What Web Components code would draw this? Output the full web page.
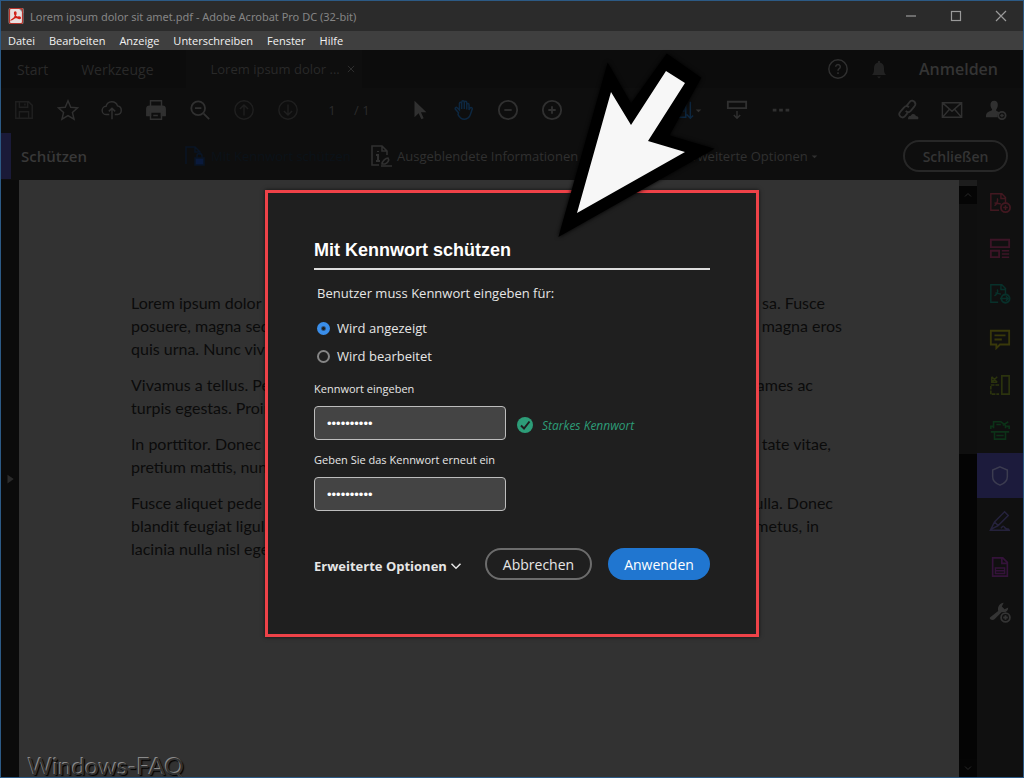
<!DOCTYPE html>
<html lang="de">
<head>
<meta charset="utf-8">
<title>Lorem ipsum dolor sit amet.pdf - Adobe Acrobat Pro DC (32-bit)</title>
<style>
html,body{margin:0;height:100%;background:#0e0e0e}
body{font-family:"Open Sans","Noto Sans",sans-serif}
</style>
</head>
<body>
<acrobat-window></acrobat-window>
<script>
const ICONS = {
  pdf: '<rect x="1" y="0" width="14" height="16" rx="2" fill="#e8e0e0"/><path d="M11 0h2a2 2 0 0 1 2 2v2z" fill="#b03028"/><rect x="1.5" y=".5" width="13" height="15" rx="1.5" fill="none" stroke="#b8352c"/><path d="M4 11.500c2-.5 4-4 4-6.500 0-1.500-1.500-1.500-1.500 0 0 2.500 3 5.500 5 5.500 1.500 0 1-1.500-.5-1.500-2.500 0-5.500 1-7 2.500z" fill="none" stroke="#d02018" stroke-width="1.3"/>',
  min: '<path d="M3 8h10"/>', max: '<rect x="3.5" y="3.5" width="9" height="9"/>', close: '<path d="M3 3l10 10M13 3L3 13"/>',
  help: '<circle cx="12" cy="12" r="10"/><path d="M9.500 9.500a2.500 2.500 0 1 1 3.800 2.200c-.9.6-1.300 1-1.300 2.100M12 15.500v2"/>',
  bell: '<path d="M5 18c2-2 2-4 2-7 0-3 1.500-5 4-5.500V4h2v1.500c2.500.5 4 2.500 4 5.500 0 3 0 5 2 7zM10 19.500h4l-2 2z" fill="currentColor" stroke="none"/>',
  save: '<path d="M3 3h14l4 4v14H3zM7 3v6h9V3M7 21v-7h10v7M13 5v2"/>',
  star: '<path d="M12 2l3 7 7.500.6-5.700 5 1.800 7.400L12 18l-6.600 4 1.800-7.400-5.700-5L9 9z"/>',
  cloud: '<path d="M9 17H6a4.500 4.500 0 0 1-.5-9A6.500 6.500 0 0 1 18 7.500 4.800 4.800 0 0 1 18 17h-3M12 22V10M8.500 13.500L12 10l3.500 3.500"/>',
  print: '<path d="M6 8V2h12v6" /><path d="M5 8h14a3 3 0 0 1 3 3v7h-4v-4H6v4H2v-7a3 3 0 0 1 3-3z" fill="currentColor"/><path d="M6 14h12v8H6zM9 18h5"/>',
  zoomout: '<circle cx="10" cy="10" r="7.500" stroke-width="2"/><path d="M16 16l6 6M6.500 10h7" stroke-width="2"/>',
  up: '<circle cx="12" cy="12" r="10"/><path d="M12 18V7M7.500 11L12 6.500l4.500 4.500"/>',
  down: '<circle cx="12" cy="12" r="10"/><path d="M12 6v11M7.500 13l4.500 4.500 4.500-4.500"/>',
  pointer: '<path d="M6 2v18l4.500-4.500L13.500 22l2.500-1-3-6.500h6z" fill="currentColor" stroke="none"/>',
  hand: '<path d="M6 15l-3.500-4c-.7-1.500 1-2.500 2-1.500L7 12V5c0-2 2.500-2 2.500 0v6V3.500c0-2 2.800-2 2.800 0V11 4c0-2 2.700-2 2.700 0v7.500V6.500c0-2 2.500-2 2.500 0V12l1-2c1-1.500 3-.5 2.500 1l-2 6c-1 3-3 5-6.500 5-4 0-5.500-2-7-5z"/>',
  minus: '<circle cx="12" cy="12" r="10" stroke-width="2"/><path d="M8 12h8" stroke-width="2"/>',
  plus: '<circle cx="12" cy="12" r="10" stroke-width="2"/><path d="M8 12h8M12 8v8" stroke-width="2"/>',
  fit: '<path d="M3 4h12v16H3zM8 8l5 5M13 9v4H9M20 3v18M16 17l4 4 3-3"/>',
  read: '<path d="M2 3h20v7H2z" stroke-width="2"/><path d="M12 13v8M8.500 17.500L12 21l3.500-3.500"/>',
  dots: '<path d="M3 10.500h4v3H3zM10 10.500h4v3h-4zM17 10.500h4v3h-4z" fill="currentColor" stroke="none"/>',
  caret: '<path d="M3 6h10l-5 5z" fill="currentColor" stroke="none"/>',
  link: '<path d="M10 8l4-5c2-2 4-1 5 0s2 3 0 5l-4 5c-2 2-4 1.500-5.500 0M13 9c-2-2-4-1.500-5.500.500l-4 4.500c-2 2-1 4 0 5s3 2 5 0l3-3.500" stroke-width="2"/><path d="M12 22c0-3 2-4 3-3.500 1-3 5-2.500 5.500 0C23 18.500 24 20 23 22z" fill="currentColor" stroke="none"/>',
  mail: '<path d="M1.500 4h21v16h-21zM2 4.500l10 9 10-9M2 19.500l7-8M22 19.500l-7-8"/>',
  person: '<path d="M10 2c3 0 4 2 4 4.500S12.500 11 12 12c0 1.500 2 1.500 4 2.500-2 1.500-2.500 3.500-2 5.500H1c0-5 2-6 5-7 2-.5 2-1 1.500-2C6.500 9 6 8 6 6.500 6 4 7 2 10 2z" fill="currentColor" stroke="none"/><circle cx="18.500" cy="18" r="4" stroke-width="2"/><path d="M18.500 16v4M16.500 18h4"/>',
  info: '<path d="M10 21H3V2h10l5 5v4M13 2v5h5"/><path d="M9 10v7M7 11h2M7 17h4M9 7v1" stroke-width="2"/><path d="M13 20c0-3 4-6 6-6 1.500 2 0 5-3 6zM12 22h11"/>',
  lock: '<path d="M3 20V3h9l5 5v3M12 3v5h5"/><path d="M12 14h9v7h-9z" fill="#0a1a3c"/><path d="M14 14v-2a2.500 2.500 0 0 1 5 0v2"/>',
  chevron: '<path d="M2 5l6 6 6-6" stroke-width="2"/>',
  check: '<circle cx="8" cy="8" r="8" fill="#2d9d78" stroke="none"/><path d="M4 8.500l3 3 5.500-7" stroke="#1f1f1f" stroke-width="2"/>',
  play: '<path d="M4 1l10 7-10 7z" fill="currentColor" stroke="none"/>',
  chevup: '<path d="M4 10l4-4 4 4"/>', chevdown: '<path d="M4 6l4 4 4-4"/>',
  create: '<path d="M11 20H2V2h12l4 4v6M13 2v5h5M6 15c3-2 4-6 3-8M6 12c3 0 5 1 7 1"/><circle cx="18" cy="17" r="5" stroke-width="2"/><path d="M18 14.500v5M15.500 17h5"/>',
  organize: '<path d="M2 3h20v8H2zM2 15h9v7H2z" stroke-width="2"/><path d="M14 15h8M14 18.500h8M14 22h8"/>',
  exportpdf: '<path d="M10 21H2V2h12l4 4v6M13 2v5h5M6 14c3-2 4-5 3-7M7 11c3 0 4 1 6 1"/><circle cx="18" cy="17" r="4.500" stroke-width="2"/><path d="M12 17h9M18.500 14.500L21 17l-2.500 2.500"/>',
  comment: '<path d="M2 3h20v15H12l-4 4v-4H2z" stroke-width="2"/><path d="M6 8h12M6 12.500h8" stroke-width="2"/>',
  combine: '<path d="M14 2h8v20h-8z" stroke-width="1.800"/><path d="M11 12H2v10h9" stroke-width="1.800" stroke-dasharray="4 1"/><path d="M3 3v6h6M3 9l6-6M3 3l6 6" />',
  scan: '<path d="M2 11V8h3M19 8h3v3M2 14h20M5 10V3h8l5 4v3M6 14v8h12v-8M8 18h8M8 6h5M15 7l6-4" stroke-width="1.800"/>',
  shield: '<path d="M12 2l8 3.500V13c0 4-3 7-8 9-5-2-8-5-8-9V5.500z" stroke-width="1.600"/>',
  pen: '<path d="M2 21l4-8L17 2l4 4L10 17zM6 13l4 4M2 22h21M13 20c2-3 3-3 4-1s2 2 5 2" stroke-width="1.600"/>',
  page: '<path d="M4 2h11l5 5v15H4zM14 2v6h6" stroke-width="1.800"/><path d="M7 13h10v6H7zM7 16h10"/>',
  wrench: '<path d="M1 18l9-7c-1-5 2-9 6-9l-2 4 3 3 4-2c0 4-3 6-7 5l-8 8c-2 2-6 0-5-2z" fill="currentColor" stroke="none"/><circle cx="18" cy="18" r="6" fill="#101010" stroke="none"/><circle cx="18" cy="18" r="4.800" stroke-width="2"/><path d="M18 15.500v5M15.500 18h5" stroke-width="2"/>'
};
const SMALL = ['pdf','min','max','close','caret','chevron','check','play','chevup','chevdown'];

class UiIcon extends HTMLElement {
  connectedCallback() {
    const n = this.getAttribute('name'), b = SMALL.includes(n) ? 16 : 24;
    this.attachShadow({mode:'open'}).innerHTML = `<style>:host{display:inline-flex;flex:none;width:var(--size,24px);height:var(--size,24px)}svg{width:100%;height:100%;display:block}</style>
    <svg viewBox="0 0 ${b} ${b}" fill="none" stroke="currentColor" stroke-width="${b === 16 ? 1.2 : 1.6}" aria-hidden="true">${ICONS[n]}</svg>`;
  }
}
customElements.define('ui-icon', UiIcon);

const define = (name, html) => customElements.define(name, class extends HTMLElement {
  constructor() { super(); this.attachShadow({mode:'open'}).innerHTML = html; }
});
const RESET = 'button{font:inherit;color:inherit;background:none;border:0;padding:0;margin:0;display:inline-flex;align-items:center;justify-content:center;white-space:nowrap}';

define('title-bar', `<style>${RESET}
:host{display:flex;align-items:center;height:30px;background:#2b2b2b;color:#858585;padding-left:7px}
ui-icon{--size:16px}.t{margin-left:6px;flex:1;white-space:nowrap;font-family:"Noto Sans",sans-serif;font-size:11px}
button{width:45px;height:30px;color:#9a9a9a}</style>
<ui-icon name="pdf"></ui-icon><span class="t">Lorem ipsum dolor sit amet.pdf - Adobe Acrobat Pro DC (32-bit)</span>
<button aria-label="Minimieren"><ui-icon name="min"></ui-icon></button><button aria-label="Maximieren"><ui-icon name="max"></ui-icon></button><button aria-label="Schließen"><ui-icon name="close"></ui-icon></button>`);

define('menu-bar', `<style>${RESET}
:host{display:flex;align-items:center;gap:14px;height:19px;background:#3f3f3f;color:#f2f2f2;font-size:11px;font-weight:500;padding-left:7px}</style>
<button>Datei</button><button>Bearbeiten</button><button>Anzeige</button><button>Unterschreiben</button><button>Fenster</button><button>Hilfe</button>`);

define('tab-strip', `<style>${RESET}
:host{display:flex;align-items:center;height:38px;background:#0c0c0c;color:#292929;font-size:14px;padding:0 25px 0 16px}
.w{margin-left:33px}.doc{display:flex;align-items:center;gap:6px;height:38px;font-size:13px;background:#0e0e0e;margin-left:32px;padding:0 6px 0 25px}
.doc button:last-child{color:#383838}.doc ui-icon{--size:10px}.sp{flex:1}.h{--size:22px;color:#303030}.b{margin-left:18px;color:#222}.a{margin-left:28px;font-size:16px;font-weight:600;color:#343434}</style>
<button>Start</button><button class="w">Werkzeuge</button>
<span class="doc"><button>Lorem ipsum dolor ...</button><button aria-label="Tab schließen"><ui-icon name="close"></ui-icon></button></span>
<span class="sp"></span><button class="h" aria-label="Hilfe"><ui-icon name="help"></ui-icon></button><button class="b" aria-label="Mitteilungen"><ui-icon name="bell"></ui-icon></button><button class="a">Anmelden</button>`);

define('tool-bar', `<style>${RESET}
:host{display:flex;align-items:center;height:44px;background:#0e0e0e;color:#303030;font-size:13px;padding:0 5px 0 1px}
button,.n{width:44px;height:44px;flex:none;display:flex;align-items:center;justify-content:center}
.n.s{justify-content:flex-start}.dim{color:#1f1f1f}.blue{color:#0d2740}.n{color:#2b2b2b}.sp{flex:1}ui-icon{--size:22px}
.fit{width:32px;justify-content:flex-end}.caret{width:9px;margin-right:12px}.caret ui-icon{--size:9px}</style>
<button class="dim" aria-label="Speichern"><ui-icon name="save"></ui-icon></button><button aria-label="Favorit"><ui-icon name="star"></ui-icon></button><button aria-label="Hochladen"><ui-icon name="cloud"></ui-icon></button><button aria-label="Drucken"><ui-icon name="print"></ui-icon></button><button aria-label="Suchen"><ui-icon name="zoomout"></ui-icon></button><button class="dim" aria-label="Vorherige Seite"><ui-icon name="up"></ui-icon></button><button class="dim" aria-label="Nächste Seite"><ui-icon name="down"></ui-icon></button>
<span class="n">1</span><span class="n s">/ 1</span>
<button aria-label="Auswahl"><ui-icon name="pointer"></ui-icon></button><button class="blue" aria-label="Hand"><ui-icon name="hand"></ui-icon></button><button aria-label="Verkleinern"><ui-icon name="minus"></ui-icon></button><button aria-label="Vergrößern"><ui-icon name="plus"></ui-icon></button>
<span class="n"></span><span class="n"></span><button class="blue fit" aria-label="Anpassen"><ui-icon name="fit"></ui-icon></button><button class="caret" aria-label="Mehr"><ui-icon name="caret"></ui-icon></button><button aria-label="Lesemodus"><ui-icon name="read"></ui-icon></button><button aria-label="Weitere Werkzeuge"><ui-icon name="dots"></ui-icon></button>
<span class="sp"></span><button aria-label="Link"><ui-icon name="link"></ui-icon></button><button aria-label="E-Mail"><ui-icon name="mail"></ui-icon></button><button aria-label="Teilen"><ui-icon name="person"></ui-icon></button>`);

define('protect-bar', `<style>${RESET}
:host{display:flex;align-items:center;height:48px;background:#0e0e0e;color:#303030;font-size:13px;padding-right:15px}
.acc{width:10px;height:46px;background:#1a1a38}h2{margin:0 0 0 10px;font-size:15px;font-weight:600;color:#383838;width:162px}
.k{color:#0b1219;gap:4px;width:186px;justify-content:flex-start}.k ui-icon{color:#0a1524}.i{gap:4px;width:316px;justify-content:flex-start}.e{gap:2px}.e ui-icon{--size:9px}
.sp{flex:1}.c{width:105px;height:32px;border:2px solid #272727;border-radius:16px;font-size:14px;font-weight:600;color:#343434}</style>
<span class="acc"></span><h2>Schützen</h2><button class="k"><ui-icon name="lock"></ui-icon>Mit Kennwort schützen</button>
<button class="i"><ui-icon name="info"></ui-icon>Ausgeblendete Informationen</button><button class="e">Erweiterte Optionen <ui-icon name="caret"></ui-icon></button>
<span class="sp"></span><button class="c">Schließen</button>`);

define('doc-line', `<style>:host{display:flex;justify-content:space-between;max-width:100%;height:23px;line-height:23px;white-space:nowrap}</style><span><slot></slot></span><span><slot name="end"></slot></span>`);

define('doc-page', `<style>:host{display:block;flex:1;min-width:0;background:#323232;color:#0b0b0b;font-family:Lato,sans-serif;font-size:16px;padding:111px 112px 0;box-sizing:border-box;overflow:hidden;position:relative}
p{margin:0 0 13px}.mark{position:absolute;left:9px;bottom:0;font:24px/22px Lato,sans-serif;color:#323232;text-shadow:-1px -1px 0 #8a8a8a,1px 1px 1px #000}</style>
<p><doc-line style="width:694px">Lorem ipsum dolor<span slot="end">sa. Fusce</span></doc-line>
<doc-line style="width:711px">posuere, magna sed<span slot="end">magna eros</span></doc-line>
<doc-line>quis urna. Nunc viverra</doc-line></p>
<p><doc-line style="width:682px">Vivamus a tellus. Pel<span slot="end">ames ac</span></doc-line>
<doc-line>turpis egestas. Proin</doc-line></p>
<p><doc-line style="width:700px">In porttitor. Donec<span slot="end">tate vitae,</span></doc-line>
<doc-line>pretium mattis, nunc</doc-line></p>
<p><doc-line style="width:702px">Fusce aliquet pede<span slot="end">ulla. Donec</span></doc-line>
<doc-line style="width:688px">blandit feugiat ligula<span slot="end">metus, in</span></doc-line>
<doc-line>lacinia nulla nisl eget</doc-line></p>
<span class="mark">Windows-FAQ</span>`);

define('scroll-rail', `<style>${RESET}
:host{display:flex;flex-direction:column;width:18px;background:#040404;color:#2b2b2b}
.s{height:6px;background:#1d1d1d}button{height:18px;background:#050505}ui-icon{--size:12px}.th{height:250px;background:#0f0f0f}.sp{flex:1}</style>
<span class="s"></span><button aria-label="Nach oben"><ui-icon name="chevup"></ui-icon></button><span class="th"></span><span class="sp"></span><button aria-label="Nach unten"><ui-icon name="chevdown"></ui-icon></button>`);

define('tool-rail', `<style>${RESET}
:host{display:grid;grid-auto-rows:45px 46px;align-content:start;width:46px;background:#101010}
ui-icon{--size:22px}.on{background:#1c1b3c}</style>
<button style="color:#421820" aria-label="PDF erstellen"><ui-icon name="create"></ui-icon></button><button style="color:#3c1426" aria-label="Seiten verwalten"><ui-icon name="organize"></ui-icon></button><button style="color:#08302a" aria-label="PDF exportieren"><ui-icon name="exportpdf"></ui-icon></button><button style="color:#39380a" aria-label="Kommentieren"><ui-icon name="comment"></ui-icon></button><button style="color:#2b330e" aria-label="Kombinieren"><ui-icon name="combine"></ui-icon></button><button style="color:#0c3218" aria-label="Scannen"><ui-icon name="scan"></ui-icon></button><button class="on" style="color:#3c3c50" aria-label="Schützen"><ui-icon name="shield"></ui-icon></button><button style="color:#25223c" aria-label="Ausfüllen"><ui-icon name="pen"></ui-icon></button><button style="color:#34133a" aria-label="Optimieren"><ui-icon name="page"></ui-icon></button><button style="color:#343434" aria-label="Weitere Werkzeuge"><ui-icon name="wrench"></ui-icon></button>`);

define('password-dialog', `<style>${RESET}
:host{display:block;box-sizing:border-box;width:494px;border:3px solid #ee4248;background:#1f1f1f;color:#e6e6e6;padding:45px 46px 54px;box-shadow:0 0 4px #000a}
h1{margin:0;font:bold 18px/24px "Liberation Sans",sans-serif;color:#fff;padding-bottom:6px;border-bottom:2px solid #dcdcdc}
fieldset{border:0;margin:13px 0 9px;padding:0 0 0 3px}legend{padding:0;font-size:13px;line-height:20px;margin-bottom:11px}
.r{display:flex;align-items:center;gap:7px;height:28px;font-size:13px}
input[type=radio]{appearance:none;box-sizing:border-box;width:13px;height:13px;margin:0;border:2px solid #858585;border-radius:50%}
input[type=radio]:checked{border:0;background:radial-gradient(circle,#1f1f1f 0 1px,#3a8eea 3px)}
.f{display:block;font-size:11px;line-height:20px;margin-bottom:7px}.row{display:flex;align-items:center;gap:11px;margin-bottom:10px}
input[type=password]{box-sizing:border-box;width:192px;height:34px;border:1px solid #bdbdbd;border-radius:4px;background:#444;color:#fff;padding:0 12px;font:13px "Liberation Sans",sans-serif}
.ok{display:flex;align-items:center;gap:9px;color:#2d9d78;font-style:italic;font-size:12px;--size:16px;padding-top:4px}
.last{margin-bottom:37px}.act{display:flex;align-items:center;gap:16px}.more{font-size:13px;font-weight:700;gap:3px;margin-right:auto;padding-top:4px}.more ui-icon{--size:12px}
.p{height:32px;border-radius:16px;font-size:14px}.x{width:107px;border:2px solid #6c6c6c}.g{width:102px;background:#2076d0;color:#fff}</style>
<h1>Mit Kennwort schützen</h1>
<fieldset><legend>Benutzer muss Kennwort eingeben für:</legend>
<label class="r"><input type="radio" name="m" checked>Wird angezeigt</label><label class="r"><input type="radio" name="m">Wird bearbeitet</label></fieldset>
<label class="f" for="a">Kennwort eingeben</label><div class="row"><input id="a" type="password" value="0123456789"><span class="ok"><ui-icon name="check"></ui-icon>Starkes Kennwort</span></div>
<label class="f" for="b">Geben Sie das Kennwort erneut ein</label><div class="row last"><input id="b" type="password" value="0123456789"></div>
<div class="act"><button class="more">Erweiterte Optionen <ui-icon name="chevron"></ui-icon></button><button class="p x">Abbrechen</button><button class="p g">Anwenden</button></div>`);

define('big-arrow', `<style>:host{display:block;width:160px;height:190px;filter:drop-shadow(0 0 2px #000)}svg{display:block}</style>
<svg viewBox="0 0 160 190" width="160" height="190" aria-hidden="true"><path d="M3 184L51 14 74 54 110 4 143 27 111 85 155 98z" stroke="#000" stroke-width="2"/><path d="M20 162L54 41 74 74 109 20 128 32 91 90 128 101z" fill="#f7f7f7"/></svg>`);

define('acrobat-window', `<style>${RESET}
:host{display:flex;flex-direction:column;min-height:100vh;box-sizing:border-box;border:1px solid #2c5a85}
main{flex:1;display:flex;flex-direction:column;position:relative}.body{flex:1;display:flex}
.nav{display:flex;width:18px;background:#0b0b0b;color:#2a2a2a;--size:10px}.nav button{width:18px}
.over{position:absolute;inset:0;display:grid;place-items:center}big-arrow{position:absolute;left:calc(50% + 45px);top:1px}</style>
<title-bar></title-bar><menu-bar></menu-bar>
<main><tab-strip></tab-strip><tool-bar></tool-bar><protect-bar></protect-bar>
<div class="body"><div class="nav"><button aria-label="Navigation öffnen"><ui-icon name="play"></ui-icon></button></div><doc-page></doc-page><scroll-rail></scroll-rail><tool-rail></tool-rail></div>
<div class="over"><password-dialog></password-dialog><big-arrow></big-arrow></div></main>`);
</script>
</body>
</html>
